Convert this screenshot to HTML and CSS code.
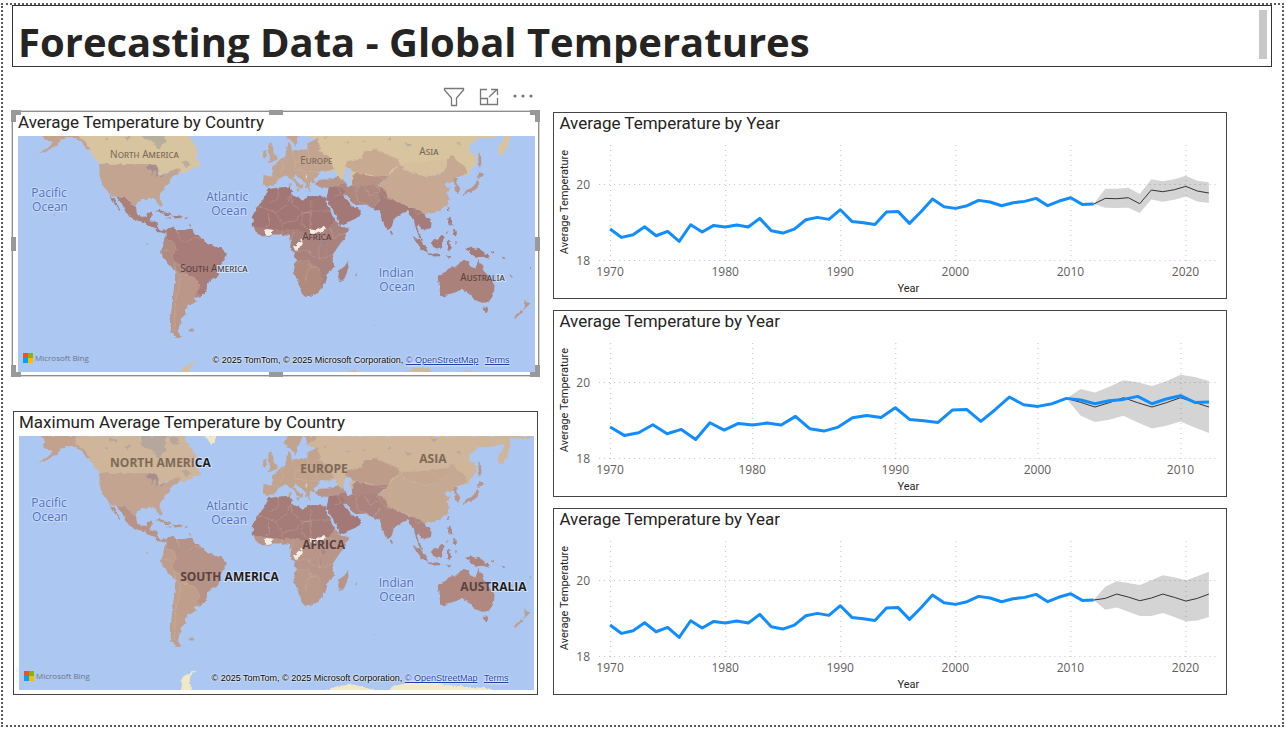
FILE: index.html
```html
<!DOCTYPE html>
<html lang="en">
<head>
<meta charset="utf-8">
<title>Forecasting Data - Global Temperatures</title>
<link rel="stylesheet" href="styles.css">
</head>
<body>
<svg class="defs" aria-hidden="true">
  <defs>
    <filter id="rough" x="0" y="0" width="100%" height="100%">
      <feTurbulence type="fractalNoise" baseFrequency=".22" numOctaves="2" seed="4"/>
      <feDisplacementMap in="SourceGraphic" scale="4" xChannelSelector="R" yChannelSelector="G"/>
    </filter>
    <g id="world">
      <g transform="translate(8 96) scale(.3333)">
        <path class="cold" d="M203 93L530 93 532 105 545 125 560 145 572 170 565 190 578 205 578 212 560 210 545 222 530 232 518 228 505 222 480 228 460 240 445 232 450 215 425 205 275 203 262 190 243 165 232 148 215 125 203 118Z"/>
        <path class="mild" d="M96 93H203V118L215 123 232 137 248 163 238 160 225 145 212 130 190 122 175 126 158 135 150 145 130 158 85 176 120 155 138 138 120 135 102 122 112 110Z"/>
        <path class="bay" d="M400 93H475L470 108 475 135 458 148 448 160 432 135 412 128 400 118ZM482 95L505 98 515 115 500 122 488 112ZM300 100L330 104 325 112 305 108ZM350 125L370 121 360 135ZM520 197L535 193 550 206 535 216ZM290 128L300 125 298 135Z"/>
        <path class="temperate" d="M275 203L425 205 450 215 445 232 460 243 480 230 505 222 515 216 518 228 500 238 487 245 478 265 468 280 455 298 455 310 462 330 455 332 445 310 425 308 400 312 388 320 380 333 370 325 350 302 325 302 308 298 292 285 280 262 274 235Z"/>
        <path class="lakes" d="M415 212L430 206 447 211 452 224 448 246 443 226 436 222 431 240 427 222ZM455 240L475 230 470 238 458 245Z"/>
        <path class="mexico" d="M325 302H350L370 325 384 333 386 350 398 362 412 362 418 350 432 350 428 368 420 375 405 378 390 375 370 365 352 348 345 330ZM308 298L316 305 325 322 339 342 333 340 318 322Z"/>
        <path class="central" d="M428 363L424 376 445 378 448 395 458 405 470 402 475 409 462 411 450 408 438 395 425 388 408 379 418 374ZM440 345L455 342 475 350 492 357 475 357 460 348ZM495 359L515 358 521 365 500 367ZM477 364H486V367H477ZM530 364H540V368H530ZM545 380L548 390 546 394Z"/>
        <path class="andes" d="M475 405L485 395 498 392 505 402 530 402 548 398 560 412 580 425 595 440 615 450 640 458 654 470 655 480 640 500 635 520 630 540 610 550 600 560 598 580 580 600 560 605 562 618 548 625 540 630 530 640 532 655 520 665 520 680 512 690 510 710 520 722 505 725 490 708 488 690 485 670 490 655 492 620 495 600 500 560 503 525 480 505 462 480 458 462 465 448 470 435 475 420Z"/>
        <path class="tropic" d="M475 405L485 395 498 392 505 402 530 402 548 398 560 412 580 425 595 440 615 450 640 458 654 470 655 480 640 500 635 520 630 540 610 550 600 560 598 580 580 600 566 590 575 575 568 552 560 545 535 538 530 515 500 498 490 478 505 462 500 442 478 430Z"/>
        <path class="south" d="M503 525L535 538 560 545 568 552 575 565 564 588 560 605 562 618 548 625 530 640 532 655 520 665 520 680 512 690 510 710 520 722 505 725 490 708 485 670 490 655 492 620 500 560Z"/>
        <path class="border" d="M478 430L500 442 505 462 490 478 500 498 530 515 535 538M505 402L512 425 530 440 555 428 580 425M500 498L503 525 518 545 510 580 502 620 500 660 498 705M535 538L560 545 568 552 575 575 562 590M458 462L490 465M503 525L520 536 540 538"/>
        <path class="south" d="M544 701L557 699 555 705 546 706ZM413 443H418V446H413ZM136 353L142 357 139 359Z"/>
        <path class="ice" d="M515 860L522 840 518 825 535 808 560 797 568 795 548 808 545 825 550 860ZM590 93H625L620 110 608 120 600 105Z"/>
      </g>
      <g transform="translate(270 96) scale(.3333)">
        <path class="cold" d="M140 93H792L775 99 740 101 718 99 720 120 712 150 695 180 682 172 685 150 700 130 700 118 660 125 620 130 600 150 595 165 620 180 615 205 592 235 575 240 530 230 400 230 230 262 180 235 130 200 120 170 140 130 120 128 110 115 130 104Z"/>
        <path class="europe" d="M-20 238L5 238 8 225 2 215 15 205 30 190 45 178 50 160 55 140 62 145 65 165 85 165 110 158 115 140 140 128 150 145 145 165 175 180 185 205 192 220 172 226 165 222 145 228 142 242 130 250 138 260 122 262 116 275 122 285 112 281 104 263 90 246 76 238 72 246 85 258 97 270 88 278 75 262 60 245 45 238 25 250 12 268-8 273-22 262Z"/>
        <path class="europe" d="M50 93H95L92 110 80 125 85 140 75 150 65 135 50 125 42 110ZM105 93H140L130 110 112 115ZM2 137L8 152 15 175 23 190 8 198-8 201 0 187-4 168-6 148ZM-20 167L-9 163-11 183-24 187ZM55 262L62 262 61 274 56 274ZM76 279L88 277 86 284Z"/>
        <path class="bay" d="M220 140L240 136 238 142ZM160 125L172 121 170 130ZM350 130L364 123 360 136ZM405 140L425 146 415 152ZM480 98L498 100 490 110ZM275 132L292 134 280 138ZM560 140L570 142 568 149Z"/>
        <path class="kazakh" d="M230 195L275 187 282 165 320 160 345 172 385 190 388 205 360 225 355 240 320 240 290 235 260 230 245 225 225 210Z"/>
        <path class="mongolia" d="M385 200L440 200 480 195 530 190 532 215 510 232 470 243 410 225Z"/>
        <path class="china" d="M388 205L410 225 470 243 510 232 530 212 530 190 545 175 560 195 585 210 592 228 575 240 555 245 545 258 525 265 528 275 540 275 530 290 538 310 530 330 500 348 480 352 465 352 430 335 410 330 370 320 345 305 320 272 340 255 360 235Z"/>
        <path class="stans" d="M245 250L247 240 262 230 300 240 355 240 330 262 320 272 290 268 265 277 246 268Z"/>
        <path class="turkey" d="M135 262L150 251 185 250 200 242 228 255 230 266 200 272 175 276 145 273Z"/>
        <path class="iran" d="M195 272L228 262 246 268 265 275 290 266 320 270 345 282 330 305 310 338 295 325 255 327 235 313 222 295 210 285Z"/>
        <path class="india" d="M330 278L345 282 352 305 395 322 410 330 430 335 465 352 470 365 484 380 482 395 465 405 445 385 440 392 448 415 460 435 450 432 438 405 432 375 418 355 410 345 398 350 370 368 362 400 350 405 335 372 325 345 310 338 328 310ZM360 403L368 408 364 418 359 414Z"/>
        <path class="arabia" d="M168 310L175 276 200 270 222 282 222 300 235 320 250 334 262 336 274 347 262 365 240 375 210 388 203 375 185 345 172 320Z"/>
        <path class="africa" d="M-10 283L0 279 25 275 60 272 65 285 62 298 85 305 98 315 110 303 130 300 165 303 170 315 185 345 200 375 205 388 225 395 238 395 230 415 205 450 188 475 192 512 170 535 170 550 155 575 135 595 105 602 98 595 88 570 78 545 70 520 78 495 72 470 60 455 62 435 58 420 35 415 10 415-5 422-28 420-45 405-52 385-52 355-38 335-20 310Z"/>
        <path class="sahara" d="M-10 283L0 279 25 275 60 272 65 285 62 298 85 305 98 315 110 303 130 300 165 303 170 315 185 345 195 368 180 395 120 408 70 400 30 402-45 392-52 385-52 355-38 335-20 310Z"/>
        <path class="kalahari" d="M70 520L78 495 115 498 140 512 155 540 155 575 135 595 105 602 98 595 88 570Z"/>
        <path class="sea" d="M142 240L147 228 165 226 174 232 192 222 202 240 185 249 160 245ZM225 220L240 216 246 226 236 235 242 250 246 268 232 273 222 255 220 238ZM165 315L171 313 190 345 207 376 202 381 184 352ZM224 297L232 297 240 312 252 322 256 328 246 326 235 315Z"/>
        <path class="nodata" d="M-16 403L-8 399 6 402 5 416-8 420-16 414ZM120 402L142 399 158 392 164 400 158 408 145 406 135 414 122 413ZM82 440L95 430 97 438 86 458 73 462 68 453 80 450ZM104 239H110V244H104Z"/>
        <path class="border" d="M60 298L52 325 15 350-20 335-38 335M62 298L65 325 98 350 120 348 123 310M123 345H178M15 350L35 380 70 375 95 352 95 385 115 400M-5 350V385L-20 405M35 380L38 412M70 400L62 435M120 413L95 425 98 440M160 408L155 440 145 460 148 485 120 478 118 465 75 462M188 475L165 485 148 485M78 495H118L120 515 108 530V560M120 515L140 512 150 530M180 395L190 425 230 410M25 275L28 305 0 320M222 300L245 325M200 270L215 295 190 300M255 275L262 315 290 325M285 270L300 300 330 285M320 272L345 305 395 322 430 335 440 355 465 352M385 200L410 225 470 243 530 215M0 238L25 245M35 192L38 215 28 235M65 165L75 195 110 200 142 210M75 195L72 220 95 225 142 228M110 160L120 185 115 200M282 165L320 160 385 195M300 240L345 245M98 352L120 348V400"/>
        <path class="lakes" d="M153 435L163 432 165 446 155 448ZM147 450L152 475 148 472Z"/>
        <path class="africa" d="M232 498L235 512 222 552 210 558 204 540 208 520 222 512ZM254 532H259V536H254Z"/>
        <path class="japan" d="M575 296L590 281 610 270 622 250 629 262 616 283 592 289 580 300ZM618 240L628 228 641 238 628 246ZM625 168L632 180 633 208 628 215 624 195ZM546 250L558 248 560 262 570 278 565 290 553 283 555 268Z"/>
        <path class="islands" d="M532 332L537 336 534 345ZM533 365L541 362 542 380 552 392 538 387ZM545 402L558 403 560 415 549 418ZM529 405L535 402 524 416ZM428 420L445 432 465 450 474 470 455 462 440 440ZM470 472L500 472 516 480 490 481ZM485 435L500 430 515 415 524 425 515 450 500 460 488 455ZM530 435L546 432 534 440 542 447 539 465 530 460ZM520 481L545 480 540 485ZM555 435L560 438 556 447ZM580 455L600 454 630 460 650 475 658 488 635 482 615 485 600 475 594 465ZM660 466L675 465 668 472ZM690 480L705 487 700 489ZM775 518L783 522 780 516Z"/>
        <path class="australia" d="M502 540L530 525 545 510 555 515 570 498 580 493 600 500 598 510 615 518 625 488 632 505 640 525 660 545 673 570 670 595 655 618 640 620 620 615 605 600 595 590 575 580 550 590 520 601 510 600 508 580ZM636 635L652 635 645 651ZM720 532L727 540 724 542ZM312 685H317V688H312Z"/>
        <path class="zealand" d="M760 605L769 618 780 622 770 632 757 643 764 625ZM753 641L759 648 736 669 730 663Z"/>
        <path class="ice" d="M150 860L205 842 250 838 330 860ZM345 860L370 842 420 833 450 832 480 835 560 842 660 850 680 860Z"/>
        <path class="coast" d="M230 828L245 822 258 822 264 828ZM395 828L428 820 432 814 450 818 475 815 485 828ZM570 828L595 823 620 828Z"/>
      </g>
    </g>
    <g id="bing">
      <path fill="#f25022" d="M0 0h5v5H0z"/><path fill="#7fba00" d="M5 0h5v5H5z"/><path fill="#00a4ef" d="M0 5h5v5H0z"/><path fill="#ffb900" d="M5 5h5v5H5z"/>
    </g>
    <polyline id="history" points="0,363 1,388 2,380 3,356 4,383 5,370 6,400 7,350 8,372 9,352 10,357 11,351 12,357 13,331 14,368 15,375 16,363 17,335 18,328 19,334 20,305 21,340 22,344 23,349 24,312 25,310 26,346 27,311 28,273 29,296 30,301 31,293 32,277 33,282 34,293 35,284 36,280 37,271 38,293 39,279 40,269 41,289 42,288"/>
  </defs>
</svg>

<main class="report">
  <header class="banner">
    <h1>Forecasting Data - Global Temperatures</h1>
    <span class="thumb"></span>
  </header>

  <div class="columns">
    <section class="maps">
      <div class="toolbar">
        <button type="button" aria-label="Filters"><svg width="22" height="20" viewBox="0 0 22 20"><path d="M1.500 1.500H20.500V3L13.500 11V18.500H8.500V11L1.500 3Z"/></svg></button>
        <button type="button" aria-label="Focus mode"><svg width="20" height="18" viewBox="0 0 20 18"><path d="M8 1.500H1.500V16.500H18.500V10M1.500 10.500H8.500V16.500M10 9L18 1.500M12 1.500H18.500V7"/></svg></button>
        <button type="button" aria-label="More options"><svg width="20" height="18" viewBox="0 0 20 18"><g class="dots"><circle cx="2" cy="8" r="1.600"/><circle cx="10" cy="8" r="1.600"/><circle cx="18" cy="8" r="1.600"/></g></svg></button>
      </div>

      <article class="map-card selected">
        <h2>Average Temperature by Country</h2>
        <div class="map average">
          <svg viewBox="18 136 517 236" role="img" aria-label="Average temperature map">
            <use class="land" href="#world"/>
            <g class="ocean"><text x="49" y="197">Pacific</text><text x="50" y="211">Ocean</text><text x="227" y="201">Atlantic</text><text x="229" y="215">Ocean</text><text x="396" y="277">Indian</text><text x="397" y="291">Ocean</text></g>
            <g class="continent caps">
              <text x="110" y="158">North America</text><text x="300" y="164">Europe</text><text x="419" y="155">Asia</text>
              <text class="deep" x="302" y="240">Africa</text><text class="deep" x="180" y="272">South <tspan>A</tspan><tspan class="open">merica</tspan></text><text class="deep" x="460" y="281">Austral<tspan class="open">ia</tspan></text>
            </g>
          </svg>
          <p class="brand"><svg width="10" height="10" viewBox="0 0 10 10"><use href="#bing"/></svg>Microsoft Bing</p>
          <p class="credit">© 2025 TomTom, © 2025 Microsoft Corporation, <a href="#osm">© OpenStreetMap</a> <a class="terms" href="#terms">Terms</a></p>
        </div>
        <i class="handle nw"></i><i class="handle n"></i><i class="handle ne"></i><i class="handle e"></i><i class="handle se"></i><i class="handle s"></i><i class="handle sw"></i><i class="handle w"></i>
      </article>

      <article class="map-card framed">
        <h2>Maximum Average Temperature by Country</h2>
        <div class="map maximum">
          <svg viewBox="19 127 515 254" role="img" aria-label="Maximum average temperature map">
            <use class="land" href="#world"/>
            <g class="ocean"><text x="49" y="198">Pacific</text><text x="50" y="212">Ocean</text><text x="227" y="201">Atlantic</text><text x="229" y="215">Ocean</text><text x="396" y="278">Indian</text><text x="397" y="292">Ocean</text></g>
            <g class="continent bold">
              <text x="110" y="158">NORTH AMERI<tspan class="open">CA</tspan></text><text x="300" y="164">EUROPE</text><text x="419" y="154">ASIA</text>
              <text class="deep" x="302" y="240">AFRICA</text><text class="deep" x="180" y="272">SOUTH <tspan class="open">AMERICA</tspan></text><text class="deep" x="460" y="282">AUST<tspan class="open">RALIA</tspan></text>
            </g>
          </svg>
          <p class="brand"><svg width="10" height="10" viewBox="0 0 10 10"><use href="#bing"/></svg>Microsoft Bing</p>
          <p class="credit">© 2025 TomTom, © 2025 Microsoft Corporation, <a href="#osm">© OpenStreetMap</a> <a class="terms" href="#terms">Terms</a></p>
        </div>
      </article>
    </section>

    <section class="charts">
      <article class="chart-card">
        <h2>Average Temperature by Year</h2>
        <svg class="chart" viewBox="0 0 671 163" role="img" aria-label="Average temperature by year with forecast to 2022">
          <path class="grid" d="M45 49.500H662M45 125.500H662M56.500 10V126M171.500 10V126M286.500 10V126M401.500 10V126M516.500 10V126M631.500 10V126"/>
          <g transform="translate(56 -27) scale(11.507 .33333)">
            <polygon class="band" points="42,288 43,242 44,242 45,239 46,258 47,214 48,220 49,214 50,203 51,218 52,223 52,285 51,280 50,265 49,275 48,281 47,274 46,315 45,299 44,300 43,299"/>
            <use class="actual" href="#history"/>
            <polyline class="forecast" points="42,288 43,271 44,272 45,269 46,287 47,246 48,251 49,245 50,235 51,249 52,255"/>
          </g>
          <g class="ticks"><text x="56" y="141">1970</text><text x="171" y="141">1980</text><text x="286" y="141">1990</text><text x="401" y="141">2000</text><text x="516" y="141">2010</text><text x="631" y="141">2020</text></g>
          <g class="ticks end"><text x="36" y="54">20</text><text x="36" y="130">18</text></g>
          <g class="names"><text x="354" y="157">Year</text><text transform="translate(14 67) rotate(-90)">Average Temperature</text></g>
        </svg>
      </article>

      <article class="chart-card">
        <h2>Average Temperature by Year</h2>
        <svg class="chart" viewBox="0 0 671 163" role="img" aria-label="Average temperature by year with forecast from 2002">
          <path class="grid" d="M45 49.500H662M45 125.500H662M56.500 10V126M198.500 10V126M341.500 10V126M483.500 10V126M626.500 10V126"/>
          <g transform="translate(56 -27) scale(14.25 .33333)">
            <polygon class="band" points="32,277 33,249 34,259 35,242 36,223 37,229 38,240 39,226 40,206 41,213 42,225 42,381 41,364 40,346 39,359 38,367 37,349 36,329 35,341 34,348 33,329"/>
            <polyline class="forecast" points="32,277 33,289 34,303 35,290 36,275 37,290 38,303 39,290 40,275 41,289 42,303"/>
            <use class="actual" href="#history"/>
          </g>
          <g class="ticks"><text x="56" y="141">1970</text><text x="198" y="141">1980</text><text x="341" y="141">1990</text><text x="483" y="141">2000</text><text x="626" y="141">2010</text></g>
          <g class="ticks end"><text x="36" y="54">20</text><text x="36" y="130">18</text></g>
          <g class="names"><text x="354" y="157">Year</text><text transform="translate(14 67) rotate(-90)">Average Temperature</text></g>
        </svg>
      </article>

      <article class="chart-card">
        <h2>Average Temperature by Year</h2>
        <svg class="chart" viewBox="0 0 671 163" role="img" aria-label="Average temperature by year with wide forecast to 2022">
          <path class="grid" d="M45 49.500H662M45 125.500H662M56.500 10V126M171.500 10V126M286.500 10V126M401.500 10V126M516.500 10V126M631.500 10V126"/>
          <g transform="translate(56 -27) scale(11.507 .33333)">
            <polygon class="band" points="42,288 43,248 44,232 45,237 46,243 47,229 48,214 49,220 50,229 51,217 52,203 52,339 51,349 50,352 49,339 48,327 47,336 46,336 45,323 44,310 43,317"/>
            <use class="actual" href="#history"/>
            <polyline class="forecast" points="42,288 43,283 44,270 45,279 46,290 47,282 48,270 49,280 50,291 51,283 52,270"/>
          </g>
          <g class="ticks"><text x="56" y="141">1970</text><text x="171" y="141">1980</text><text x="286" y="141">1990</text><text x="401" y="141">2000</text><text x="516" y="141">2010</text><text x="631" y="141">2020</text></g>
          <g class="ticks end"><text x="36" y="54">20</text><text x="36" y="130">18</text></g>
          <g class="names"><text x="354" y="157">Year</text><text transform="translate(14 67) rotate(-90)">Average Temperature</text></g>
        </svg>
      </article>
    </section>
  </div>
</main>
</body>
</html>
```
FILE: styles.css
```css
* { box-sizing: border-box; }
body {
  margin: 0;
  padding: 3px 2px 2px 1px;
  background: #fff;
  color: #252423;
  font-family: Roboto, "Noto Sans", sans-serif;
}
h1, h2, p { margin: 0; }
.defs { position: absolute; width: 0; height: 0; }

.report {
  min-height: calc(100vh - 5px);
  padding: 0 10px 30px 9px;
  border: 2px dotted #5a5a5a;
}
.banner {
  display: flex;
  justify-content: space-between;
  height: 62px;
  padding: 4px 4px 3px 5px;
  border: 1px solid #333;
  overflow: hidden;
}
.banner h1 {
  height: 53px;
  overflow: hidden;
  font: 700 40px/63px "Open Sans", "Noto Sans", sans-serif;
  white-space: nowrap;
}
.thumb { width: 8px; height: 49px; background: #c8c8c8; }

.columns {
  display: grid;
  grid-template-columns: 527fr 673fr;
  gap: 14px;
  padding-right: 45px;
}
h2 {
  height: 22px;
  font-weight: 400;
  font-size: 17px;
  line-height: 20px;
}

.toolbar {
  display: flex;
  justify-content: flex-end;
  align-items: center;
  gap: 14px;
  height: 44px;
  padding: 15px 6px 0 0;
}
.toolbar button {
  display: flex;
  padding: 0;
  border: 0;
  background: none;
}
.toolbar svg { fill: none; stroke: #777; stroke-width: 1.3; }
.toolbar .dots { fill: #777; stroke: none; }

.map-card { position: relative; }
.selected {
  padding: 0 3px 3px 5px;
  border: 1px solid #8e8e8e;
  outline: 1px solid #d4d4d4;
}
.framed {
  margin: 35px 1px 0;
  padding: 0 3px 4px 5px;
  border: 1px solid #444;
}
.map-card h2 { height: 24px; }
.map { position: relative; background: #acc7f2; overflow: hidden; }
.map > svg { display: block; width: 100%; }
.land { filter: url(#rough); }

.handle { position: absolute; width: 10px; height: 12px; border: 0 solid #999; }
.nw { top: -2px; left: -2px; border-width: 5px 0 0 5px; }
.ne { top: -2px; right: -2px; border-width: 5px 5px 0 0; }
.se { bottom: -2px; right: -2px; border-width: 0 5px 5px 0; }
.sw { bottom: -2px; left: -2px; border-width: 0 0 5px 5px; }
.n, .s { left: calc(50% - 7px); width: 14px; height: 5px; background: #999; }
.n { top: -2px; }
.s { bottom: -2px; }
.e, .w { top: calc(50% - 7px); width: 5px; height: 14px; background: #999; }
.e { right: -2px; }
.w { left: -2px; }

.average {
  --cold: #d8c5a0; --mild: #c3a38e; --europe: #c3a491; --kazakh: #c7aa90; --china: #c6a893;
  --mongolia: #d5bf9c; --stans: #b89384; --turkey: #b9958a; --iran: #ae877f; --india: #a67b78;
  --arabia: #a37877; --africa: #aa827d; --sahara: #a27675; --kalahari: #b18a7e; --mexico: #a98179;
  --tropic: #a77c79; --andes: #b18a81; --south: #ba9788; --australia: #ab817b; --ice: #d4be9b; --coast: #d0b894;
}
.maximum {
  --cold: #cfb599; --mild: #c2a18d; --europe: #c2a38e; --kazakh: #be9c8a; --china: #c6a993;
  --mongolia: #c5a68e; --stans: #ae8780; --turkey: #b9958a; --iran: #ab827d; --india: #ad857e;
  --arabia: #a37877; --africa: #b89588; --sahara: #a67c79; --kalahari: #bb998a; --mexico: #b89385;
  --tropic: #b69386; --andes: #bf9d8c; --south: #bf9e8c; --australia: #b08880; --ice: #f0e8c6; --coast: none;
}
.cold { fill: var(--cold); }
.mild { fill: var(--mild); }
.temperate { fill: #c3a490; }
.europe { fill: var(--europe); }
.kazakh { fill: var(--kazakh); }
.mongolia { fill: var(--mongolia); }
.china { fill: var(--china); }
.stans { fill: var(--stans); }
.turkey, .japan { fill: var(--turkey); }
.iran { fill: var(--iran); }
.india, .islands { fill: var(--india); }
.arabia { fill: var(--arabia); }
.africa { fill: var(--africa); }
.sahara { fill: var(--sahara); }
.kalahari { fill: var(--kalahari); }
.mexico { fill: var(--mexico); }
.central, .tropic { fill: var(--tropic); }
.andes { fill: var(--andes); }
.south, .zealand { fill: var(--south); }
.australia { fill: var(--australia); }
.ice { fill: var(--ice); }
.coast { fill: var(--coast); }
.bay { fill: #a49f9c; fill-opacity: .6; }
.lakes { fill: #93808e; fill-opacity: .6; }
.sea { fill: #acc7f2; }
.nodata { fill: #f1efe6; }
.border { fill: none; stroke: #dbc3b2; stroke-width: 1.5; stroke-opacity: .5; }

.ocean {
  fill: #4f70c2;
  font: 12px "Open Sans", "Noto Sans", sans-serif;
  text-anchor: middle;
  paint-order: stroke;
  stroke: #c6d8f6;
  stroke-width: 2px;
}
.continent { fill: #7d6957; font-family: "Open Sans", "Noto Sans", sans-serif; font-size: 12px; }
.continent .deep { fill: #5b4140; }
.continent .open { fill: #4a4444; paint-order: stroke; stroke: #d3e0f6; stroke-width: 2px; }
.caps { font-family: "Noto Sans", sans-serif; font-size: 10px; font-variant: small-caps; }
.bold { font-weight: 700; }
.bold .open { fill: #1c1c1c; }

.brand {
  position: absolute;
  left: 5px;
  bottom: 8px;
  display: flex;
  align-items: center;
  gap: 2px;
  color: #6d7686;
  font: 8px/12px "Open Sans", "Noto Sans", sans-serif;
}
.credit {
  position: absolute;
  right: 26px;
  bottom: 6px;
  color: #000;
  font: 9px/12px "Liberation Sans", Arial, sans-serif;
  text-shadow: 0 0 2px #fff, 0 0 2px #fff;
  white-space: nowrap;
}
.credit a { color: #1b3fae; }
.terms { margin-left: 4px; }

.charts {
  display: flex;
  flex-direction: column;
  gap: 11px;
  padding-top: 45px;
}
.chart-card { border: 1px solid #444; }
.chart-card h2 { padding-left: 5px; }
.chart { display: block; width: 100%; }
.grid { fill: none; stroke: #c4c4c4; stroke-width: 1; stroke-dasharray: 1 4; }
.band { fill: #000; fill-opacity: .17; }
.actual, .forecast { fill: none; stroke-linejoin: round; }
#history, .forecast { vector-effect: non-scaling-stroke; }
.actual { stroke: #118dff; stroke-width: 3px; }
.forecast { stroke: #333; stroke-width: 1px; }
.ticks { fill: #605e5c; font: 12px "Open Sans", "Noto Sans", sans-serif; text-anchor: middle; }
.end { text-anchor: end; }
.names { fill: #252423; font: 11px Roboto, sans-serif; text-anchor: middle; }
```
